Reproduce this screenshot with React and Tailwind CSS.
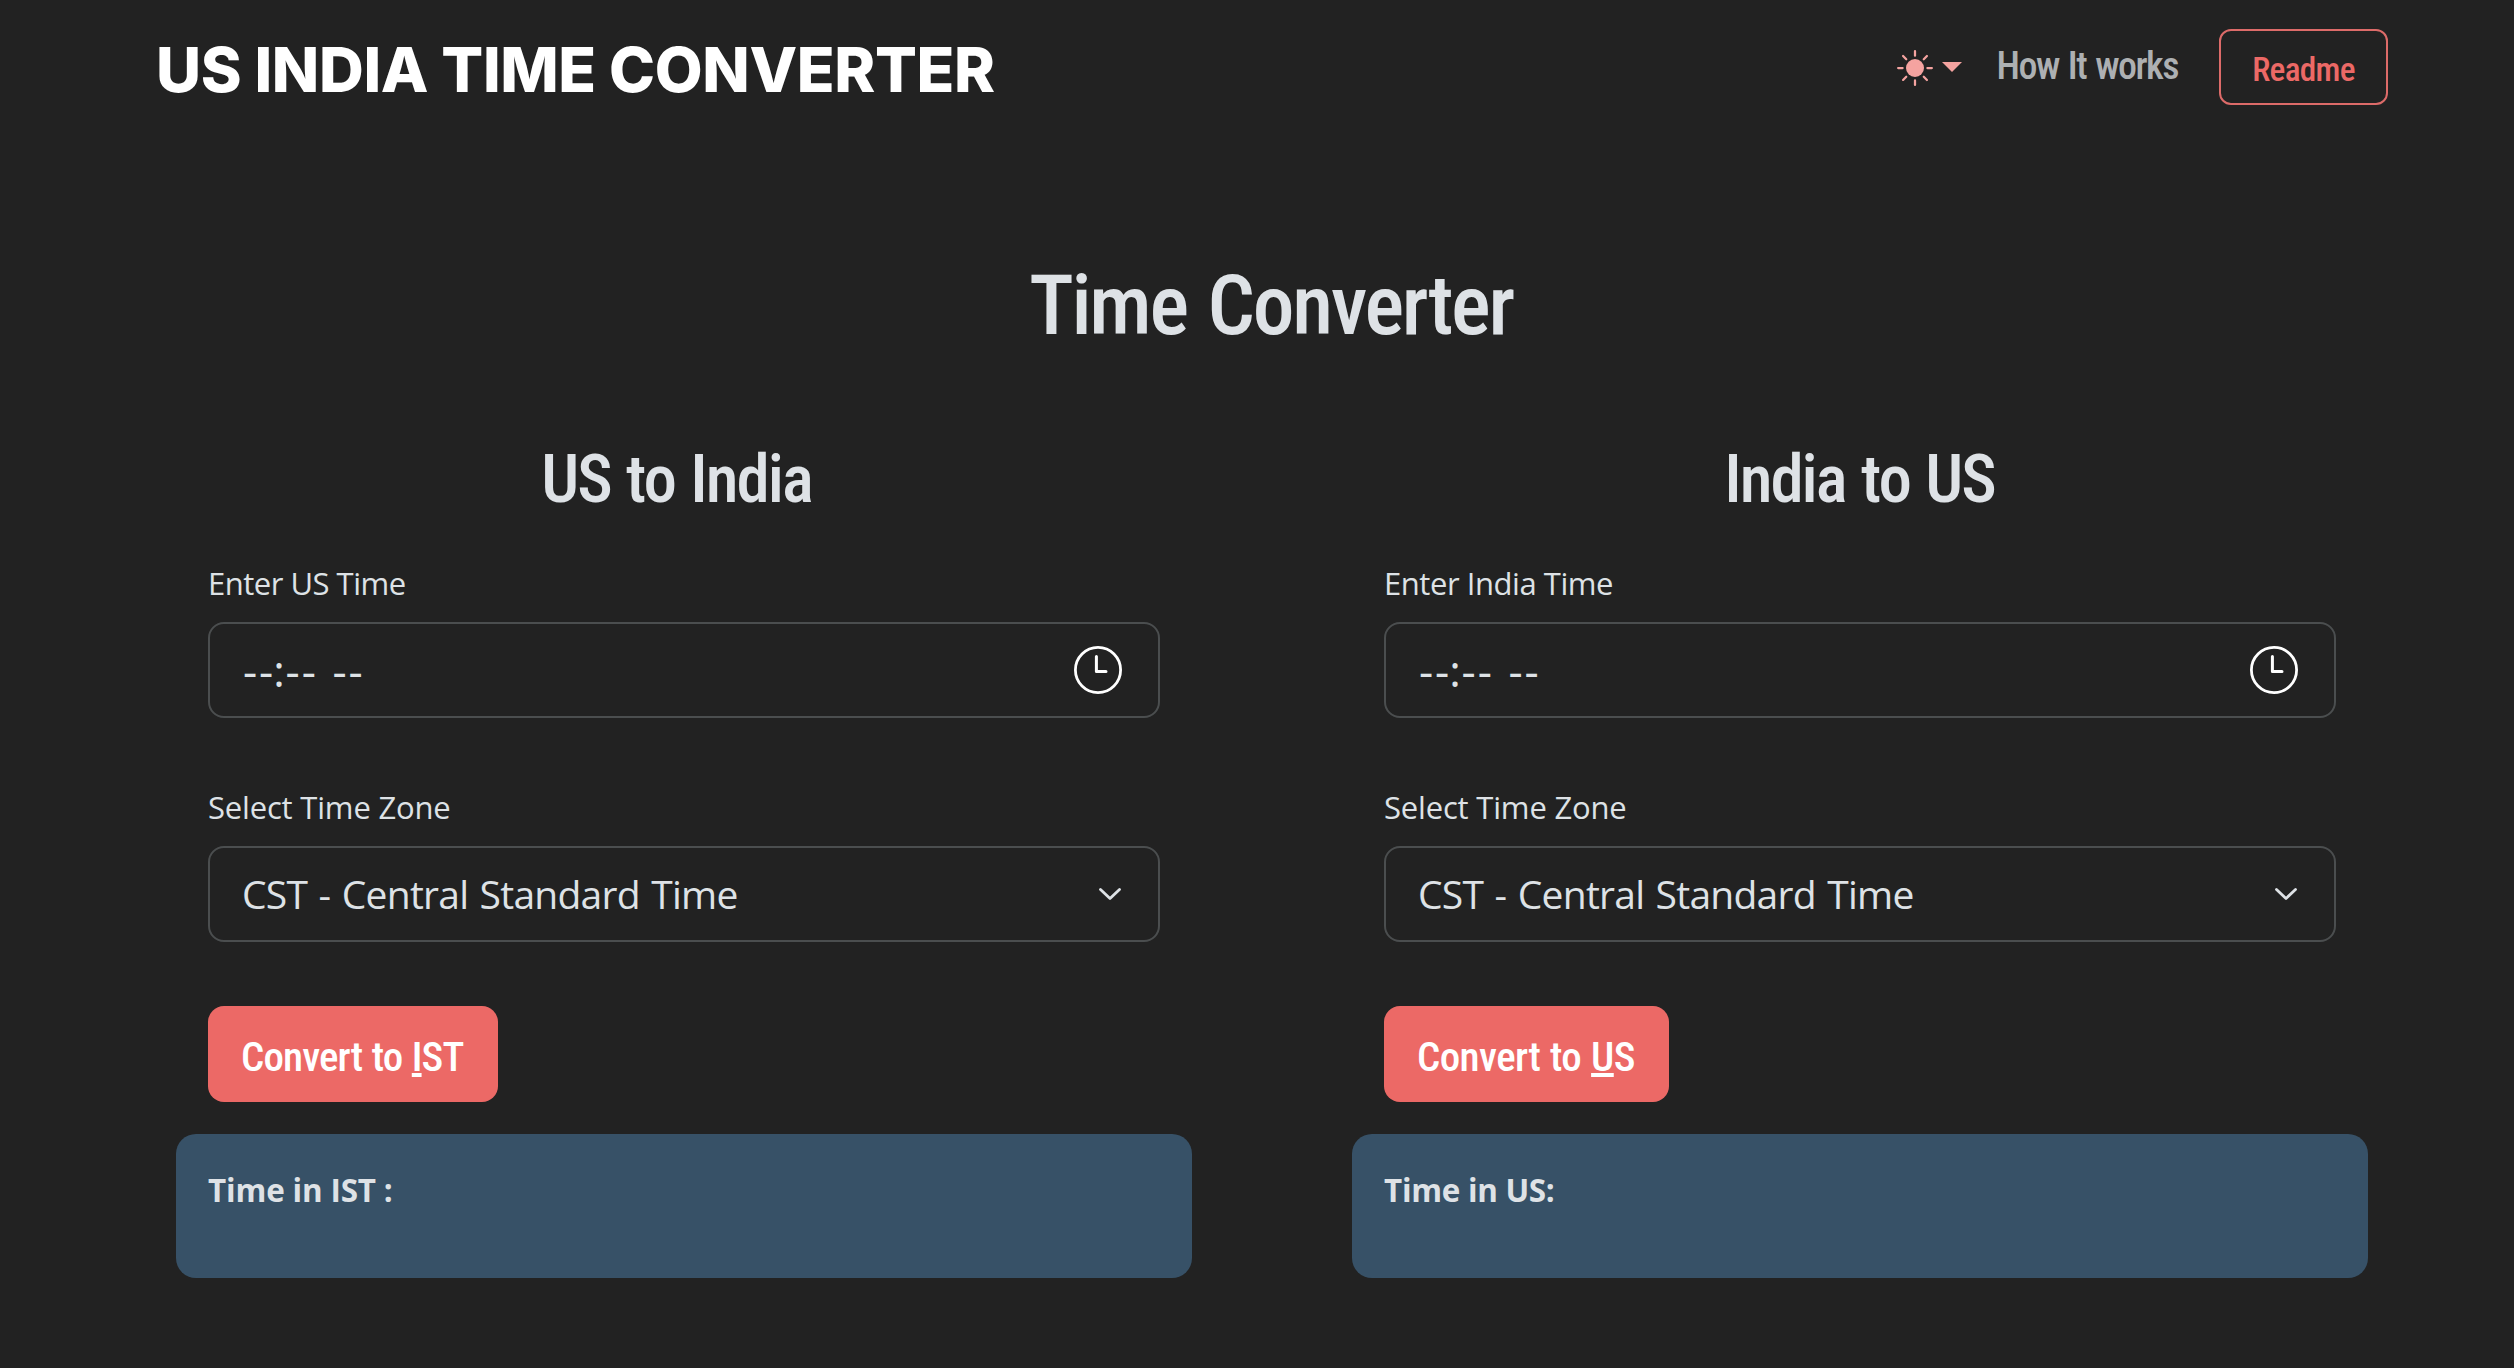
function SunIcon() {
  return (
    <svg viewBox="0 0 16 16" className="mt-0.5 size-9 fill-[#f5a3a0]">
      <circle cx="8" cy="8" r="4" />
      <path d="M8 0a.5.5 0 0 1 .5.5v2a.5.5 0 0 1-1 0v-2A.5.5 0 0 1 8 0zm0 13a.5.5 0 0 1 .5.5v2a.5.5 0 0 1-1 0v-2A.5.5 0 0 1 8 13zm8-5a.5.5 0 0 1-.5.5h-2a.5.5 0 0 1 0-1h2a.5.5 0 0 1 .5.5zM3 8a.5.5 0 0 1-.5.5h-2a.5.5 0 0 1 0-1h2A.5.5 0 0 1 3 8zm10.657-5.657a.5.5 0 0 1 0 .707l-1.414 1.415a.5.5 0 1 1-.707-.708l1.414-1.414a.5.5 0 0 1 .707 0zm-9.193 9.193a.5.5 0 0 1 0 .707L3.05 13.657a.5.5 0 0 1-.707-.707l1.414-1.414a.5.5 0 0 1 .707 0zm9.193 2.121a.5.5 0 0 1-.707 0l-1.414-1.414a.5.5 0 0 1 .707-.707l1.414 1.414a.5.5 0 0 1 0 .707zM4.464 4.465a.5.5 0 0 1-.707 0L2.343 3.05a.5.5 0 1 1 .707-.707l1.414 1.414a.5.5 0 0 1 0 .708z" />
    </svg>
  );
}

function ClockIcon() {
  return (
    <svg viewBox="0 0 48 48" className="size-12 fill-none stroke-white">
      <circle cx="24" cy="24" r="22.6" strokeWidth="2.8" />
      <path d="M22.4 10.5V25.6H32" strokeWidth="3" strokeLinecap="round" strokeLinejoin="round" />
    </svg>
  );
}

function ChevronIcon() {
  return (
    <svg viewBox="0 0 22 12" className="h-3 w-[22px] fill-none stroke-[#dee2e6]">
      <path d="M1.5 1.5L11 10.5L20.5 1.5" strokeWidth="2.8" strokeLinecap="round" strokeLinejoin="round" />
    </svg>
  );
}

function Field({ label, labelClass, children }) {
  return (
    <div className="flex flex-col">
      <label className={`h-[63px] text-[31px] leading-[48px] ${labelClass}`}>{label}</label>
      <div className="flex h-24 items-center justify-between rounded-2xl border-2 border-[#4b4e4f] pr-[37px] pl-8">
        {children}
      </div>
    </div>
  );
}

function Converter({ heading, headingClass, timeLabel, timeLabelClass, letter, rest, buttonClass, result, resultClass }) {
  return (
    <section className="flex flex-col">
      <h2
        className={`mb-10 text-center font-['Roboto'] text-[67px] leading-[80px] font-[480] tracking-[-2px] [font-stretch:75%] [word-spacing:2px] ${headingClass}`}
      >
        {heading}
      </h2>
      <div className="flex flex-col px-8">
        <Field label={timeLabel} labelClass={timeLabelClass}>
          <span className="pl-px text-[44px] leading-[60px] tracking-[1.9px]">
            --<span className="-ml-[2px] -mr-px">:</span>--<span className="pl-[1.5px]"> --</span>
          </span>
          <span className="-mr-px">
            <ClockIcon />
          </span>
        </Field>
        <div className="h-[65px]" />
        <Field label="Select Time Zone" labelClass="tracking-[-0.18px]">
          <span className="text-[39px] leading-[60px] tracking-[-0.75px] [word-spacing:2px]">
            CST - Central Standard Time
          </span>
          <ChevronIcon />
        </Field>
        <button
          className={`mt-16 mb-8 h-24 self-start rounded-2xl bg-[#ec6966] pt-[5px] pl-[33px] text-left font-['Roboto'] text-[41px] leading-[60px] font-[480] whitespace-nowrap text-white [font-stretch:75%] [word-spacing:1px] ${buttonClass}`}
        >
          Convert to{' '}
          <u className="underline decoration-4 underline-offset-[2px] [text-decoration-skip-ink:none]">{letter}</u>
          {rest}
        </button>
      </div>
      <div className="h-36 rounded-[20px] bg-[#375167] px-8 pt-8">
        <p className={`text-[31.4px] leading-[48px] font-bold ${resultClass}`}>{result}</p>
      </div>
    </section>
  );
}

export default function App() {
  return (
    <div className="h-[1368px] overflow-hidden bg-[#222222] font-['Open_Sans',sans-serif] text-[#dee2e6]">
      <header className="flex h-[134px] items-center justify-between pr-[126px] pl-[156px]">
        <h1 className="pt-[5px] font-['Inter'] text-[62px] leading-[72px] font-extrabold tracking-[-0.36px] text-white">
          US INDIA TIME CONVERTER
        </h1>
        <nav className="flex items-center font-['Roboto'] font-[480] [font-stretch:75%]">
          <div className="flex items-center gap-[9px]">
            <SunIcon />
            <svg viewBox="0 0 20 10" className="h-2.5 w-5 fill-[#f5a3a0]">
              <path d="M0 0H20L10 10Z" />
            </svg>
          </div>
          <a className="ml-[35px] pb-[3px] text-[38px] leading-[50px] tracking-[-1.55px] text-[#adb0b2] [word-spacing:2px]">
            How It works
          </a>
          <a className="ml-[41px] flex h-[76px] w-[169px] items-center justify-center rounded-xl border-2 border-[#dd6b69] pt-[5px] text-[33.3px] tracking-[-0.7px] text-[#ec6966]">
            Readme
          </a>
        </nav>
      </header>
      <main className="pt-[122px] pr-[146px] pl-[176px]">
        <h1 className="pr-[2px] text-center font-['Roboto'] text-[83.5px] leading-[100px] font-[480] tracking-[-2.3px] [font-stretch:75%] [word-spacing:4px]">
          Time Converter
        </h1>
        <div className="mt-[83px] grid grid-cols-2 gap-40">
          <Converter
            heading="US to India"
            headingClass="pr-[15px]"
            timeLabel="Enter US Time"
            timeLabelClass="tracking-[-0.5px]"
            letter="I"
            rest="ST"
            buttonClass="w-[290px] tracking-[-0.9px]"
            result="Time in IST :"
            resultClass="tracking-[-0.15px]"
          />
          <Converter
            heading="India to US"
            headingClass="pr-px"
            timeLabel="Enter India Time"
            timeLabelClass="tracking-[-0.45px]"
            letter="U"
            rest="S"
            buttonClass="w-[285px] tracking-[-0.6px]"
            result="Time in US:"
            resultClass="tracking-[-0.28px]"
          />
        </div>
      </main>
    </div>
  );
}
